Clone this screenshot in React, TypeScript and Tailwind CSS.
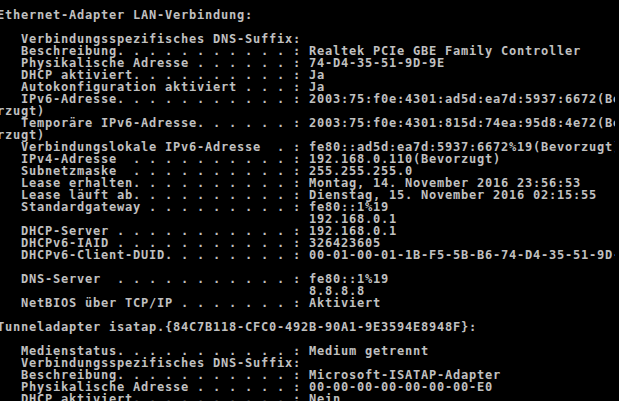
import React from 'react';

// ipconfig /all output, as shown in the console (80 columns, wraps at col 80)
const lines: string[] = [
  'Ethernet-Adapter LAN-Verbindung:',
  '',
  '   Verbindungsspezifisches DNS-Suffix: ',
  '   Beschreibung. . . . . . . . . . . : Realtek PCIe GBE Family Controller',
  '   Physikalische Adresse . . . . . . : 74-D4-35-51-9D-9E',
  '   DHCP aktiviert. . . . . . . . . . : Ja',
  '   Autokonfiguration aktiviert . . . : Ja',
  '   IPv6-Adresse. . . . . . . . . . . : 2003:75:f0e:4301:ad5d:ea7d:5937:6672(Bevo',
  'rzugt)',
  '   Temporäre IPv6-Adresse. . . . . . : 2003:75:f0e:4301:815d:74ea:95d8:4e72(Bevo',
  'rzugt)',
  '   Verbindungslokale IPv6-Adresse  . : fe80::ad5d:ea7d:5937:6672%19(Bevorzugt)',
  '   IPv4-Adresse  . . . . . . . . . . : 192.168.0.110(Bevorzugt)',
  '   Subnetzmaske  . . . . . . . . . . : 255.255.255.0',
  '   Lease erhalten. . . . . . . . . . : Montag, 14. November 2016 23:56:53',
  '   Lease läuft ab. . . . . . . . . . : Dienstag, 15. November 2016 02:15:55',
  '   Standardgateway . . . . . . . . . : fe80::1%19',
  '                                       192.168.0.1',
  '   DHCP-Server . . . . . . . . . . . : 192.168.0.1',
  '   DHCPv6-IAID . . . . . . . . . . . : 326423605',
  '   DHCPv6-Client-DUID. . . . . . . . : 00-01-00-01-1B-F5-5B-B6-74-D4-35-51-9D-9E',
  '',
  '   DNS-Server  . . . . . . . . . . . : fe80::1%19',
  '                                       8.8.8.8',
  '   NetBIOS über TCP/IP . . . . . . . : Aktiviert',
  '',
  'Tunneladapter isatap.{84C7B118-CFC0-492B-90A1-9E3594E8948F}:',
  '',
  '   Medienstatus. . . . . . . . . . . : Medium getrennt',
  '   Verbindungsspezifisches DNS-Suffix: ',
  '   Beschreibung. . . . . . . . . . . : Microsoft-ISATAP-Adapter',
  '   Physikalische Adresse . . . . . . : 00-00-00-00-00-00-00-E0',
  '   DHCP aktiviert. . . . . . . . . . : Nein',
];

export default function App() {
  return (
    <div className="w-[619px] h-[401px] bg-black overflow-hidden flex">
      <div className="w-[615px] h-full overflow-hidden">
        <div className="ml-[-3px] pt-[9px] w-[640px] font-['DejaVu_Sans_Mono',monospace] font-bold text-[12px] leading-[12px] tracking-[0.776px] text-[#c0c0c0]">
          {lines.map((line, i) => (
            <div key={i} className="h-[12px] whitespace-pre">
              {line}
            </div>
          ))}
        </div>
      </div>
    </div>
  );
}
